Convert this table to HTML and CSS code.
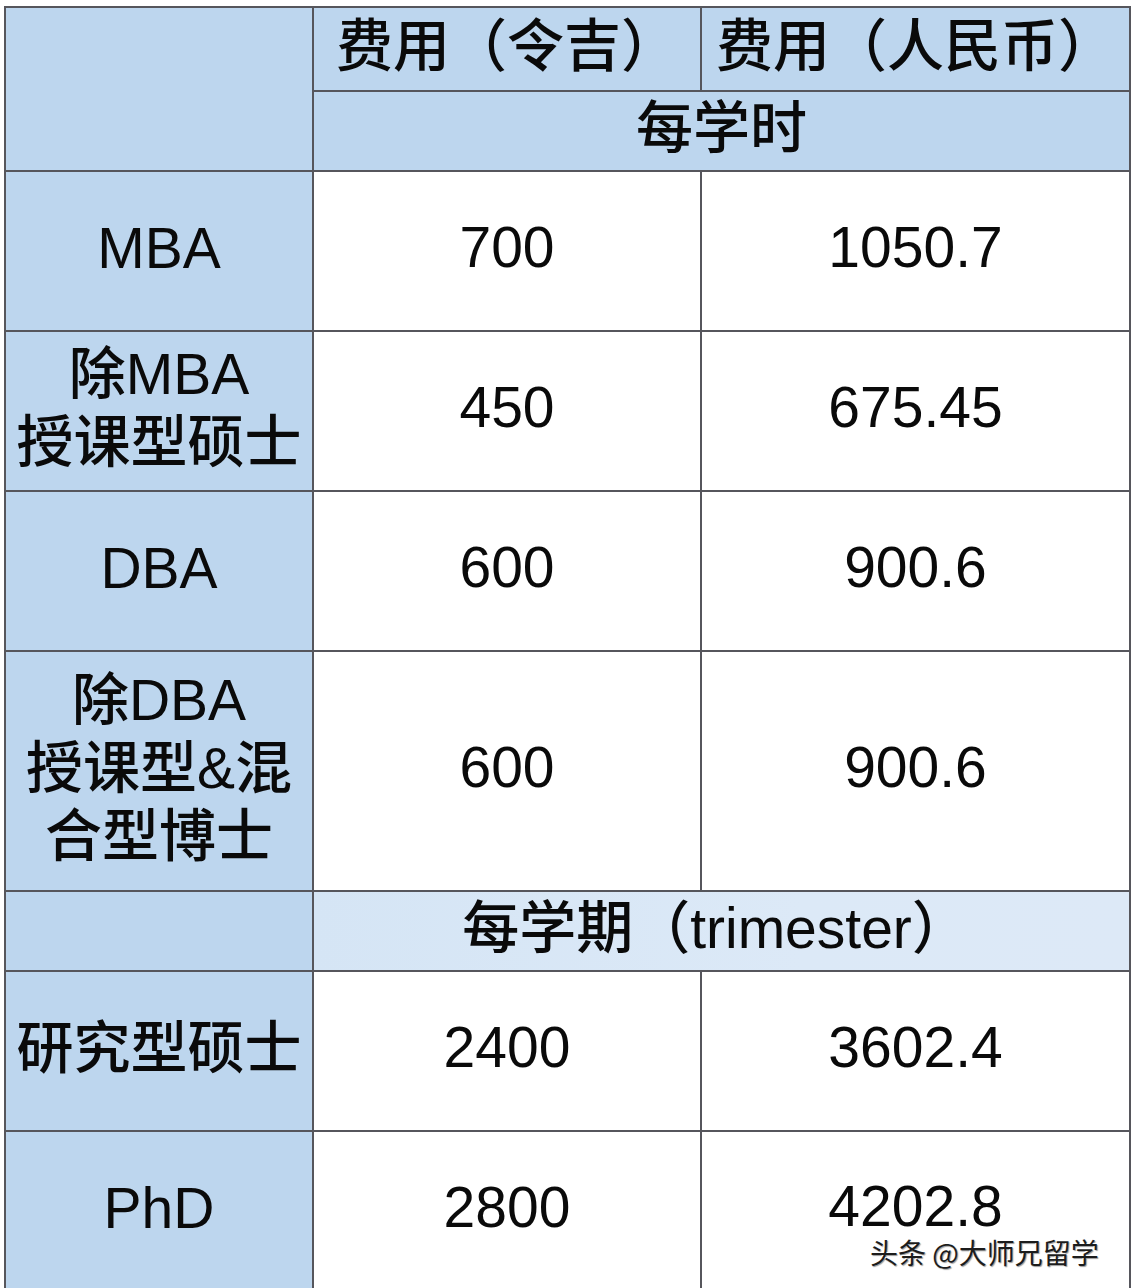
FILE: index.html
```html
<!DOCTYPE html>
<html lang="zh-CN">
<head>
<meta charset="utf-8">
<title>学费表</title>
<link rel="stylesheet" href="styles.css">
</head>
<body>
<div class="sheet">
  <div class="cell head corner"></div>
  <div class="cell head">费用（令吉）</div>
  <div class="cell head">费用（人民币）</div>
  <div class="cell head span2">每学时</div>

  <div class="cell label">MBA</div>
  <div class="cell value">700</div>
  <div class="cell value">1050.7</div>

  <div class="cell label">除MBA<br>授课型硕士</div>
  <div class="cell value">450</div>
  <div class="cell value">675.45</div>

  <div class="cell label">DBA</div>
  <div class="cell value">600</div>
  <div class="cell value">900.6</div>

  <div class="cell label">除DBA<br>授课型&amp;混<br>合型博士</div>
  <div class="cell value">600</div>
  <div class="cell value">900.6</div>

  <div class="cell label"></div>
  <div class="cell sub span2">每学期（trimester）</div>

  <div class="cell label">研究型硕士</div>
  <div class="cell value">2400</div>
  <div class="cell value">3602.4</div>

  <div class="cell label">PhD</div>
  <div class="cell value">2800</div>
  <div class="cell value last">4202.8</div>
</div>
<div class="watermark">头条 @大师兄留学</div>
</body>
</html>
```

FILE: styles.css
```css
html, body {
  margin: 0;
  padding: 0;
  background: #ffffff;
  overflow: hidden;
}

body {
  position: relative;
  width: 1132px;
  height: 1288px;
  font-family: "Liberation Sans", "Noto Sans CJK SC", sans-serif;
  color: #0a0a0a;
}

.sheet {
  display: grid;
  grid-template-columns: 306px 386px 427px;
  grid-template-rows: 82px 78px 158px 158px 158px 238px 78px 158px 158px;
  gap: 2px;
  padding: 2px;
  margin: 6px 0 0 4px;
  width: fit-content;
  background: #56565c;
}

.cell {
  background: #ffffff;
  display: flex;
  align-items: center;
  justify-content: center;
  text-align: center;
  font-size: 57px;
  font-weight: 500;
  line-height: 68px;
  padding-bottom: 6px;
  box-sizing: border-box;
  white-space: nowrap;
}

.value {
  line-height: 46px;
  padding-bottom: 8px;
}

.last {
  padding-bottom: 10px;
}

.head {
  background: #bdd6ee;
}

.corner {
  grid-row: span 2;
}

.span2 {
  grid-column: span 2;
}

.label {
  background: #bdd6ee;
}

.sub {
  background: linear-gradient(90deg, #d5e5f5 0%, #dce9f7 60%, #dde9f7 100%);
  padding-right: 12px;
}

.watermark {
  position: absolute;
  left: 870px;
  top: 1240px;
  font-family: "Noto Sans CJK SC", sans-serif;
  font-size: 28px;
  line-height: 24px;
  color: #1c1c1c;
  text-shadow: -1px -1px 0 #ffffff, 1px 1px 1px #9a9a9a;
  white-space: nowrap;
}
```
